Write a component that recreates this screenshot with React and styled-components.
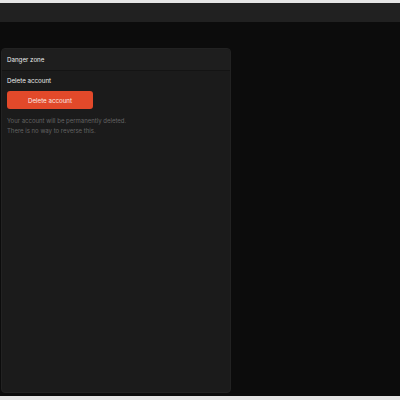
import React from "react"
import styled, { createGlobalStyle } from "styled-components"

const GlobalStyle = createGlobalStyle`
  html, body {
    margin: 0;
    padding: 0;
    background: #e6e6e6;
  }
  * {
    box-sizing: border-box;
  }
`

const Page = styled.div`
  height: 400px;
  padding: 3px 0 4px;
  display: flex;
  flex-direction: column;
  font-family: Inter, "Liberation Sans", sans-serif;
`

const TopBar = styled.div`
  height: 19px;
  background: #212121;
  flex-shrink: 0;
`

const Main = styled.div`
  flex: 1;
  background: #0c0c0c;
  padding: 26px 0 3px 1px;
  display: flex;
`

const Card = styled.section`
  width: 230px;
  background: #1b1b1b;
  border: 1px solid #222222;
  border-radius: 4px;
  display: flex;
  flex-direction: column;
`

const CardHeader = styled.div`
  height: 22px;
  padding: 0 5px;
  display: flex;
  align-items: center;
  background: #1e1e1e;
  border-bottom: 1px solid #141414;
  border-radius: 4px 4px 0 0;
  color: #ececec;
  font-size: 6.2px;
`

const CardBody = styled.div`
  padding: 5px 5px;
  display: flex;
  flex-direction: column;
  align-items: flex-start;
`

const Label = styled.div`
  color: #ececec;
  font-size: 6.2px;
  line-height: 10px;
`

const DangerButton = styled.button`
  margin-top: 5px;
  width: 86px;
  height: 18px;
  border: none;
  border-radius: 3px;
  background: #e2492a;
  color: #fbe9e4;
  font-family: inherit;
  font-size: 6.2px;
  cursor: pointer;
`

const Note = styled.p`
  margin: 7px 0 0;
  color: #636363;
  font-size: 6px;
  line-height: 10px;
`

export default function App() {
  return (
    <Page>
      <GlobalStyle />
      <TopBar />
      <Main>
        <Card>
          <CardHeader>Danger zone</CardHeader>
          <CardBody>
            <Label>Delete account</Label>
            <DangerButton>Delete account</DangerButton>
            <Note>
              Your account will be permanently deleted.
              <br />
              There is no way to reverse this.
            </Note>
          </CardBody>
        </Card>
      </Main>
    </Page>
  )
}
